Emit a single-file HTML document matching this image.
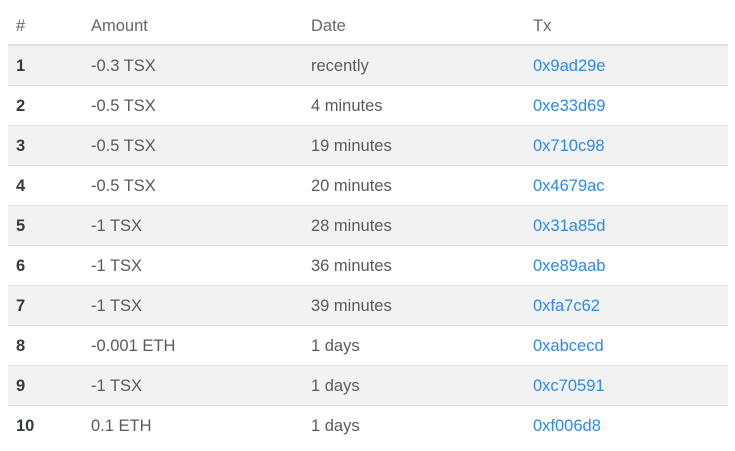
<!DOCTYPE html>
<html><head><style>
body{margin:0;background:#fff;font-family:"Liberation Sans",sans-serif;}
table{position:absolute;left:8px;top:7px;width:720px;border-collapse:collapse;font-size:16.5px;color:#5a5a5a;}
th{font-weight:normal;text-align:left;height:35px;border-bottom:2px solid #dee2e6;padding:2px 0 0 0;color:#666;}
td{height:37px;border-bottom:1px solid #dee2e6;padding:2px 0 0 0;}
tr:last-child td{border-bottom:none}
tbody tr:nth-child(odd){background:#f2f2f2}
td:first-child,th:first-child{padding-left:8px;width:75px}
td:first-child{font-weight:bold;color:#343a40}
td:nth-child(2),th:nth-child(2){width:220px}
td:nth-child(3),th:nth-child(3){width:222px}
a{color:#2b8ae8;text-decoration:none}
</style></head><body>
<table>
<thead><tr><th>#</th><th>Amount</th><th>Date</th><th>Tx</th></tr></thead>
<tbody>
<tr><td>1</td><td>-0.3 TSX</td><td>recently</td><td><a>0x9ad29e</a></td></tr>
<tr><td>2</td><td>-0.5 TSX</td><td>4 minutes</td><td><a>0xe33d69</a></td></tr>
<tr><td>3</td><td>-0.5 TSX</td><td>19 minutes</td><td><a>0x710c98</a></td></tr>
<tr><td>4</td><td>-0.5 TSX</td><td>20 minutes</td><td><a>0x4679ac</a></td></tr>
<tr><td>5</td><td>-1 TSX</td><td>28 minutes</td><td><a>0x31a85d</a></td></tr>
<tr><td>6</td><td>-1 TSX</td><td>36 minutes</td><td><a>0xe89aab</a></td></tr>
<tr><td>7</td><td>-1 TSX</td><td>39 minutes</td><td><a>0xfa7c62</a></td></tr>
<tr><td>8</td><td>-0.001 ETH</td><td>1 days</td><td><a>0xabcecd</a></td></tr>
<tr><td>9</td><td>-1 TSX</td><td>1 days</td><td><a>0xc70591</a></td></tr>
<tr><td>10</td><td>0.1 ETH</td><td>1 days</td><td><a>0xf006d8</a></td></tr>
</tbody></table>
</body></html>
